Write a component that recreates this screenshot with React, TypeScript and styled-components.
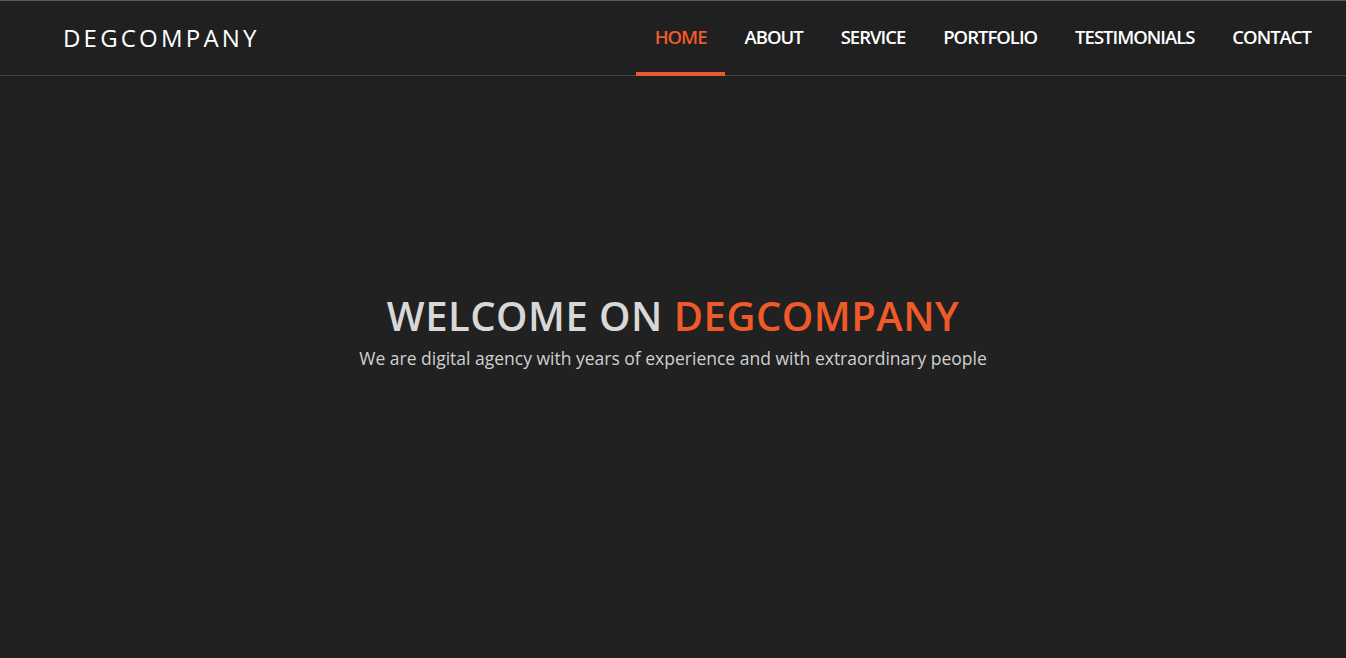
import React from "react";
import styled, { createGlobalStyle } from "styled-components";

const Global = createGlobalStyle`
  html, body { margin: 0; padding: 0; background: #212121; }
  body { font-family: "Open Sans", "Liberation Sans", sans-serif; }
  * { box-sizing: border-box; }
`;

const Page = styled.div`
  min-height: 658px;
  background: #212121;
  border-top: 1px solid #5a5a5a;
  display: flex;
  flex-direction: column;
`;

const Header = styled.header`
  height: 75px;
  display: flex;
  align-items: stretch;
  justify-content: space-between;
  padding: 0 16px 0 63px;
  border-bottom: 1px solid #444;
  background: #202020;
`;

const Logo = styled.div`
  display: flex;
  align-items: center;
  color: #fff;
  font-size: 24px;
  letter-spacing: 3.2px;
  font-weight: 400;
  padding-bottom: 2px;
`;

const Nav = styled.nav`
  display: flex;
  align-items: stretch;
`;

const NavItem = styled.a<{ $active?: boolean }>`
  position: relative;
  display: flex;
  align-items: center;
  padding: 0 19px 3px;
  font-size: 18.5px;
  font-weight: 600;
  letter-spacing: -1px;
  color: ${(p) => (p.$active ? "#ee5a2c" : "#fff")};
  text-decoration: none;
  &::after {
    content: "";
    position: absolute;
    left: 0;
    right: 0;
    bottom: -1px;
    height: 4px;
    background: ${(p) => (p.$active ? "#e85a33" : "transparent")};
  }
`;

const Hero = styled.section`
  flex: 1;
  display: flex;
  flex-direction: column;
  align-items: center;
  padding-top: 214px;
`;

const Title = styled.h1`
  margin: 0;
  font-size: 40px;
  font-weight: 600;
  letter-spacing: 0.5px;
  color: #d8d8d8;
  line-height: 52px;
`;

const Accent = styled.span`
  color: #f05a28;
`;

const Subtitle = styled.p`
  margin: 3px 0 0;
  font-size: 17.5px;
  color: #d0d0d0;
  line-height: 26px;
`;

const items = ["HOME", "ABOUT", "SERVICE", "PORTFOLIO", "TESTIMONIALS", "CONTACT"];

export default function App() {
  return (
    <>
      <Global />
      <Page>
        <Header>
          <Logo>DEGCOMPANY</Logo>
          <Nav>
            {items.map((it, i) => (
              <NavItem key={it} href="#" $active={i === 0}>
                {it}
              </NavItem>
            ))}
          </Nav>
        </Header>
        <Hero>
          <Title>
            WELCOME ON <Accent>DEGCOMPANY</Accent>
          </Title>
          <Subtitle>We are digital agency with years of experience and with extraordinary people</Subtitle>
        </Hero>
      </Page>
    </>
  );
}
